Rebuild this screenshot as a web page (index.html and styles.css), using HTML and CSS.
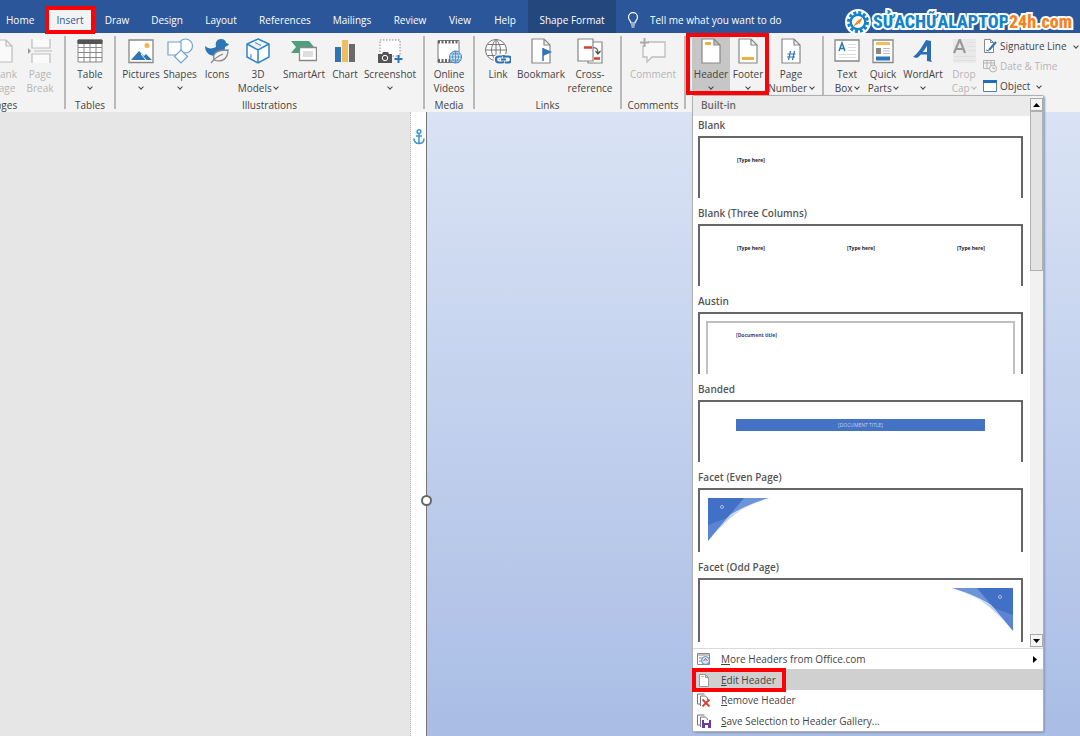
FILE: index.html
```html
<!DOCTYPE html>
<html lang="en">
<head>
<meta charset="utf-8">
<title>Insert Header</title>
<link rel="stylesheet" href="styles.css">
</head>
<body>
<div class="app">
  <header class="topbar">
    <nav class="tabs">
      <button class="tab">Home</button>
      <button class="tab active marked">Insert</button>
      <button class="tab">Draw</button>
      <button class="tab">Design</button>
      <button class="tab">Layout</button>
      <button class="tab">References</button>
      <button class="tab">Mailings</button>
      <button class="tab">Review</button>
      <button class="tab">View</button>
      <button class="tab">Help</button>
      <button class="tab contextual">Shape Format</button>
    </nav>
    <button class="tell">
      <svg width="12" height="16" viewBox="0 0 12 16" fill="none" stroke="#fff" stroke-width="1.2"><path d="M4 11c0-2-2.500-3-2.500-5.800a4.500 4.500 0 0 1 9 0C10.500 8 8 9 8 11zM4 13h4M4.500 15h3"/></svg>
      Tell me what you want to do
    </button>
    <div class="brand">
      <svg width="26" height="26" viewBox="0 0 26 26"><circle cx="13" cy="13" r="10.500" fill="none" stroke="#fff" stroke-width="5"/><circle cx="13" cy="13" r="9.500" fill="none" stroke="#1583c9" stroke-width="3" stroke-dasharray="3 1.970"/><circle cx="13" cy="13" r="7.300" fill="#fff" stroke="#1583c9" stroke-width="2.400"/><path d="M17.500 8.500l-3 6.500-2.500-2.500z" fill="#f58220"/><path d="M17.500 8.500L12 12.500l2 2zM8.500 17.500l3-5 2 2z" fill="#f58220"/></svg>
      <span class="brand-name">SỬACHỮALAPTOP<span class="brand-tail">24h.com</span></span>
    </div>
  </header>

  <section class="ribbon">
    <div class="group pages">
      <div class="tools">
        <button class="tool w36 off"><svg class="ico" viewBox="0 0 26 26" fill="#fafafa" stroke="#bdbdbd" stroke-width="1.200"><path d="M3 2h12l6 6v16H3zM15 2v6h6"/></svg>Blank<br>Page</button>
        <button class="tool w36 off"><svg class="ico" viewBox="0 0 26 26" fill="#fafafa" stroke="#bdbdbd" stroke-width="1.200"><path d="M5 1v9h18V1M5 25v-9h18v9M7 13h18"/><path d="M1 10l3 3-3 3z" fill="#999" stroke="none"/></svg>Page<br>Break</button>
      </div>
      <div class="caption">Pages</div>
    </div>
    <div class="group">
      <div class="tools">
        <button class="tool w48"><svg class="ico" viewBox="0 0 26 26" fill="#fff" stroke="#888" stroke-width="1"><path d="M1 2h24v22H1zM1 9.500h24M1 14.500h24M1 19.500h24M7 5v19M13 5v19M19 5v19"/><path d="M1 2h24v3.500H1z" fill="#555" stroke="#555"/></svg>Table<br><i class="chev"></i></button>
      </div>
      <div class="caption">Tables</div>
    </div>
    <div class="group pad">
      <div class="tools">
        <button class="tool w40"><svg class="ico" viewBox="0 0 26 26"><path d="M1 2h24v22.500H1z" fill="#fff" stroke="#888" stroke-width="1.300"/><circle cx="19" cy="7.500" r="2.500" fill="#f0b450"/><path d="M3 22l8-9 5 5 2-2 6 6z" fill="#2e75b6"/><path d="M13 16l5 6" stroke="#fff"/></svg>Pictures<br><i class="chev"></i></button>
        <button class="tool w38"><svg class="ico" viewBox="0 0 26 26" fill="#fff" stroke="#6fa3d2" stroke-width="1.200"><circle cx="18.500" cy="8" r="7"/><path d="M1 4h13v13H1z"/><path d="M14 12l6.500 6.500L14 25l-6.500-6.500z"/></svg>Shapes<br><i class="chev"></i></button>
        <button class="tool w36"><svg class="ico" viewBox="0 0 26 26"><path d="M1 8c3 3 7 3 11 1-1-5 1-8 5-8 3 0 5 2 5 4l3 1c-1 2-3 2-4 3 0 5-3 9-9 9C6 18 1 15 1 8z" fill="#2e75b6"/><path d="M10 22c-2-7 3-10 14-10 0 8-5 13-14 10z" fill="#f3f3f3" stroke="#888" stroke-width="1.300"/><path d="M7 25c3-4 7-7 12-9" fill="none" stroke="#888" stroke-width="1.300"/></svg>Icons</button>
        <button class="tool w46"><svg class="ico" viewBox="0 0 26 26" fill="#fff" stroke="#2e86c8" stroke-width="1.500"><path d="M13 1l11 5v13l-11 6-11-6V6zM2 6l11 6 11-6M13 12v13"/><path d="M6 16v4M10 4.500l6 3" stroke-width="1"/></svg>3D<br>Models <i class="chev"></i></button>
        <button class="tool w46"><svg class="ico" viewBox="0 0 26 26"><path d="M0 3h18l5 6-5 6H0l5-6z" fill="#4f9e7e"/><path d="M8.500 9.500h17v13h-17z" fill="#fff" stroke="#888" stroke-width="1.300"/><path d="M12 13h10v6H12z" fill="#ddd"/></svg>SmartArt</button>
        <button class="tool w36"><svg class="ico" viewBox="0 0 26 26"><path d="M3 9h6v15H3z" fill="#2e75b6"/><path d="M10 2h6v22h-6z" fill="#f2bd60"/><path d="M17 6h6v18h-6z" fill="#6a6a6a"/></svg>Chart</button>
        <button class="tool w54"><svg class="ico" viewBox="0 0 26 26"><path d="M3 2h20v16H3z" fill="#fff" stroke="#888" stroke-dasharray="1.500 1.500"/><path d="M1 16h4l1-2h5l1 2h3v9H1z" fill="#555"/><circle cx="8" cy="20" r="2.700" fill="#555" stroke="#fff"/><path d="M17.500 21h8M21.500 17v8" stroke="#2e75b6" stroke-width="2"/></svg>Screenshot<br><i class="chev"></i></button>
      </div>
      <div class="caption">Illustrations</div>
    </div>
    <div class="group">
      <div class="tools">
        <button class="tool w48"><svg class="ico" viewBox="0 0 26 26"><path d="M2 2.500h21v22H2z" fill="#fff" stroke="#777"/><path d="M2 4h21M2 22.500h21" stroke="#666" stroke-width="3" stroke-dasharray="2 1.500"/><circle cx="19.500" cy="19" r="6" fill="#d5e6f5" stroke="#3f87c6"/><path d="M13.500 19h12M19.500 13v12M15 16h9M15 22h9M19.500 13c-4 4-4 8 0 12 4-4 4-8 0-12" fill="none" stroke="#3f87c6" stroke-width=".8"/></svg>Online<br>Videos</button>
      </div>
      <div class="caption">Media</div>
    </div>
    <div class="group pad">
      <div class="tools">
        <button class="tool w36"><svg class="ico" viewBox="0 0 26 26" fill="none"><circle cx="11" cy="12" r="10.500" fill="#fff" stroke="#777"/><path d="M.5 12h21M11 1.500v21M2.500 6.500h17M2.500 17.500h17M11 1.500c-6 6-6 15 0 21M11 1.500c6 6 6 15 0 21" stroke="#777"/><path d="M17 18.500h-3a3 3 0 0 0 0 6h3M15 21.500h8M20 24.500h3a3 3 0 0 0 0-6h-3" stroke="#f3f3f3" stroke-width="5"/><path d="M17 18.500h-3a3 3 0 0 0 0 6h3a3 3 0 0 0 2-1M20 24.500h3a3 3 0 0 0 0-6h-3a3 3 0 0 0-2 1M16 21.500h5" stroke="#2e75b6" stroke-width="2.200"/></svg>Link</button>
        <button class="tool w50"><svg class="ico" viewBox="0 0 26 26"><path d="M4 1h12l6 6v18H4zM16 1v6h6" fill="#fff" stroke="#888" stroke-width="1.200"/><path d="M15 10l9 4-9 4z" fill="#2e75b6"/><path d="M15 10v13" stroke="#2e75b6" stroke-width="1.500"/></svg>Bookmark</button>
        <button class="tool w48"><svg class="ico" viewBox="0 0 26 26" fill="#fff" stroke="#888" stroke-width="1.200"><path d="M11 4h14v21H11z"/><path d="M1 1h15v22H1z"/><path d="M7 9.500h8M17 20.500h6" stroke="#d8402c" stroke-width="2.500"/><path d="M16 10c3-1 5 1 5 5M18.500 13l2.500 3 2.500-3" fill="none" stroke="#555"/></svg>Cross-<br>reference</button>
      </div>
      <div class="caption">Links</div>
    </div>
    <div class="group">
      <div class="tools">
        <button class="tool w62 off"><svg class="ico" viewBox="0 0 26 26" fill="#f8f8f8" stroke="#bdbdbd" stroke-width="1.300"><path d="M3 7v12h4v5l5-5h13V4H8"/><path d="M4.500 0v9M0 4.500h9" stroke="#aaa" stroke-width="2"/></svg>Comment</button>
      </div>
      <div class="caption">Comments</div>
    </div>
    <div class="group hf">
      <div class="tools">
        <div class="pair marked">
          <button class="tool w38 pressed"><svg class="ico" viewBox="0 0 26 26"><path d="M4 1h12l6 6v18H4zM16 1v6h6" fill="#fff" stroke="#888" stroke-width="1.200"/><path d="M7 5.500h6" stroke="#eeb044" stroke-width="3"/></svg>Header<br><i class="chev"></i></button>
          <button class="tool w36"><svg class="ico" viewBox="0 0 26 26"><path d="M4 1h12l6 6v18H4zM16 1v6h6" fill="#fff" stroke="#888" stroke-width="1.200"/><path d="M7 20.500h12" stroke="#eeb044" stroke-width="3"/></svg>Footer<br><i class="chev"></i></button>
        </div>
        <button class="tool w50"><svg class="ico" viewBox="0 0 26 26"><path d="M4 1h12l6 6v18H4zM16 1v6h6" fill="#fff" stroke="#888" stroke-width="1.200"/><path d="M12.500 13l-2 9M16.500 13l-2 9M9.500 16h8M9 19h8" stroke="#2e75b6" stroke-width="1.200"/></svg>Page<br>Number <i class="chev"></i></button>
      </div>

      <div class="menu">
        <div class="gallery">
          <div class="gallery-main">
            <div class="band">Built-in</div>
            <div class="entries">
              <button class="entry"><span class="name">Blank</span><span class="sheet"><span class="cols"><span>[Type here]</span></span></span></button>
              <button class="entry"><span class="name">Blank (Three Columns)</span><span class="sheet"><span class="cols"><span>[Type here]</span><span>[Type here]</span><span>[Type here]</span></span></span></button>
              <button class="entry"><span class="name">Austin</span><span class="sheet framed"><span class="inner">[Document title]</span></span></button>
              <button class="entry"><span class="name">Banded</span><span class="sheet"><span class="stripe">[DOCUMENT TITLE]</span></span></button>
              <button class="entry"><span class="name">Facet (Even Page)</span><span class="sheet facet"><svg width="61" height="43" viewBox="0 0 61 43"><path d="M0 0h61C35 8 16 22 0 43z" fill="#dfe8f7"/><path d="M0 0h61C44 5 31 11 20 18L0 27z" fill="#6d93d8"/><path d="M0 0h36L0 43z" fill="#5b85d2"/><path d="M0 0h36L19 20 0 27z" fill="#4170c6"/><path d="M20 19l12-7C20 21 10 31 0 43z" fill="#b9cdf0"/><circle cx="14" cy="9" r="1.500" fill="none" stroke="#a9bfe8"/></svg></span></button>
              <button class="entry"><span class="name">Facet (Odd Page)</span><span class="sheet facet odd"><svg width="61" height="43" viewBox="0 0 61 43"><path d="M61 0H0c26 8 45 22 61 43z" fill="#dfe8f7"/><path d="M61 0H0c17 5 30 11 41 18l20 9z" fill="#6d93d8"/><path d="M61 0H25l36 43z" fill="#5b85d2"/><path d="M61 0H25l17 20 19 7z" fill="#4170c6"/><path d="M41 19l-12-7c12 9 22 19 32 31z" fill="#b9cdf0"/><circle cx="48" cy="9" r="1.500" fill="none" stroke="#a9bfe8"/></svg></span></button>
            </div>
          </div>
          <div class="scroll">
            <button class="arrow" aria-label="Scroll up"><svg width="7" height="4" viewBox="0 0 7 4"><path d="M0 4l3.500-4L7 4z"/></svg></button>
            <div class="thumb"></div>
            <button class="arrow down" aria-label="Scroll down"><svg width="7" height="4" viewBox="0 0 7 4"><path d="M0 0h7L3.500 4z"/></svg></button>
          </div>
        </div>
        <div class="commands">
          <button class="command"><svg width="14" height="14" viewBox="0 0 14 14" fill="none"><path d="M.5 1.500h12v11H.5z" fill="#fff" stroke="#888"/><path d="M.5 3h12M2 6h3M2 9h3" stroke="#888"/><circle cx="8.500" cy="8.500" r="4" fill="#d5e6f5" stroke="#4b8fca"/><path d="M6.500 9l2-2.500 2 2.500" stroke="#d8402c"/></svg><span><u>M</u>ore Headers from Office.com</span><svg class="more" width="4" height="7" viewBox="0 0 4 7"><path d="M0 0l4 3.500L0 7z"/></svg></button>
          <button class="command hot"><svg width="14" height="14" viewBox="0 0 14 14"><path d="M2.500 1.500h6l3 3v9h-9zM8.500 1.500v3h3" fill="#fff" stroke="#999"/><path d="M4 3.500h3" stroke="#eeb044"/></svg><span class="marked"><u>E</u>dit Header</span></button>
          <button class="command"><svg width="14" height="14" viewBox="0 0 14 14" fill="none"><path d="M3 11H.5V1h7M3.500 13V3h5l2 2v2" stroke="#777"/><path d="M5.500 6.500l7 7M12.500 6.500l-7 7" stroke="#d8402c" stroke-width="1.800"/></svg><span><u>R</u>emove Header</span></button>
          <button class="command"><svg width="14" height="14" viewBox="0 0 14 14" fill="none"><path d="M3 11H.5V1h7M3.500 13V3h5l2 2v1" stroke="#777"/><path d="M5 6h9v8H5z" fill="#6d3aa0"/><path d="M7 6h5v3H7zM8 11h3v3H8z" fill="#fff"/></svg><span><u>S</u>ave Selection to Header Gallery...</span></button>
        </div>
      </div>
    </div>
    <div class="group pad last">
      <div class="tools">
        <button class="tool w36"><svg class="ico" viewBox="0 0 26 26"><path d="M1 2h24v21H1z" fill="#fff" stroke="#888" stroke-width="1.300"/><path d="M5 13l3-8 3 8M6 10.500h4" fill="none" stroke="#2e75b6" stroke-width="1.500"/><path d="M14 6.500h8M14 9.500h8M14 12.500h8M5 16.500h17M5 19.500h17" stroke="#ddd"/></svg>Text<br>Box <i class="chev"></i></button>
        <button class="tool w36"><svg class="ico" viewBox="0 0 26 26"><path d="M3 2h20v22.500H3z" fill="#fff" stroke="#888" stroke-width="1.300"/><path d="M6 5.500h14" stroke="#f2bd60" stroke-width="3"/><path d="M6 10h5v6H6z" fill="#888"/><path d="M13 10.500h7M13 13h7M13 15.500h7" stroke="#bbb"/><path d="M6 20.500h14" stroke="#2e75b6" stroke-width="4"/></svg>Quick<br>Parts <i class="chev"></i></button>
        <button class="tool w44"><svg class="ico" viewBox="0 0 26 26" fill="#2e6db5"><path d="M16 2l5 1v19l1 2-5-1V8c-4 6-7 10-10 12l-4-1c5-4 9-10 13-17z"/><path d="M10 14h9v2.500H8z"/></svg>WordArt<br><i class="chev"></i></button>
        <button class="tool w38 off"><svg class="ico" viewBox="0 0 26 26" fill="none"><path d="M2 1h23v24H2z" fill="#e9e9e9"/><path d="M3 15L8.500 2h.5l5 13M5 11h7.500" stroke="#999" stroke-width="2.200"/><path d="M16 4.500h8M16 8.500h8M16 12.500h8M3 18.500h21M3 22.500h21" stroke="#e0e0e0"/></svg>Drop<br>Cap <i class="chev"></i></button>
        <div class="rows">
          <button class="row"><svg width="14" height="14" viewBox="0 0 14 14" fill="none"><path d="M1.500.5h6l3 3v10h-9zM7.500.5v3h3" fill="#fff" stroke="#888"/><path d="M13 3l-7 8" stroke="#2e75b6" stroke-width="2"/><path d="M3 11l3 1" stroke="#2e75b6"/></svg>Signature Line <i class="chev wide"></i></button>
          <button class="row off"><svg width="14" height="14" viewBox="0 0 14 14" fill="none" stroke="#b5b5b5"><path d="M.5 1.500h11v8H.5zM.5 4h11M4 2v7M8 2v7"/><circle cx="10" cy="9.500" r="3.500" fill="#f3f3f3"/><path d="M10 7.500v2h2"/></svg>Date &amp; Time</button>
          <button class="row"><svg width="14" height="14" viewBox="0 0 14 14"><path d="M.5 1.500h13v11H.5z" fill="#fff" stroke="#5a7fae"/><path d="M0 1h14v3H0z" fill="#1f6dbb"/></svg>Object <i class="chev wide"></i></button>
        </div>
      </div>
    </div>
  </section>

  <main class="workspace">
    <div class="shape"></div>
    <div class="margin">
      <svg class="anchor" width="12" height="16" viewBox="0 0 12 16" fill="none" stroke="#3a96cf" stroke-width="1.500"><circle cx="6" cy="2.700" r="1.900"/><path d="M6 4.500v10M3 7h6M1 9.500c0 3 2 5 5 5s5-2 5-5"/></svg>
      <span class="handle"></span>
    </div>
    <div class="backdrop"></div>
  </main>
</div>
</body>
</html>
```

FILE: styles.css
```css
* { box-sizing: border-box; }
body {
  margin: 0;
  font-family: "Open Sans", "Noto Sans", sans-serif;
  font-size: 10px;
  line-height: 14px;
  color: #444;
}
button {
  font: inherit;
  color: inherit;
  background: none;
  border: 0;
  padding: 0;
  margin: 0;
  white-space: nowrap;
}
svg { flex: none; }
.app {
  height: 100vh;
  min-height: 736px;
  display: flex;
  flex-direction: column;
  overflow: hidden;
}

/* Tab bar */
.topbar {
  display: flex;
  height: 33px;
  background: #2b579a;
  color: #fff;
}
.tabs {
  display: grid;
  grid-template-columns: 40px 48px 46px 54px 54px 74px 60px 56px 44px 46px 88px;
  padding-left: 6px;
}
.tab { padding-top: 7px; font-weight: 500; }
.active {
  color: #2b579a;
  background: #f3f3f3;
  margin-top: 8px;
  padding-top: 0;
  padding-bottom: 1px;
}
.tab:first-child { text-align: left; }
.contextual { background: #24477d; }
.marked { position: relative; }
.marked::after {
  content: "";
  position: absolute;
  inset: -2px -1px -1px;
  border: 4px solid #fb0207;
}
.tell {
  display: flex;
  align-items: center;
  gap: 11px;
  padding: 7px 0 0 11px;
}
.brand {
  display: flex;
  align-items: center;
  margin-left: auto;
  padding: 11px 8px 0 0;
  gap: 2px;
  position: relative;
  z-index: 2;
}
.brand-name {
  font-family: "Roboto Condensed", Roboto, sans-serif;
  font-size: 18px;
  font-weight: 800;
  line-height: 24px;
  color: #1583c9;
  -webkit-text-stroke: 4px #fff;
  paint-order: stroke fill;
}
.brand-tail { color: #f58220; }

/* Ribbon */
.ribbon {
  display: flex;
  height: 79px;
  background: #f3f3f3;
  padding: 3px 0;
}
.group {
  flex: none;
  display: flex;
  flex-direction: column;
  border-right: 2px solid #b9b9b9;
  position: relative;
}
.pages { width: 123px; margin-left: -57px; }
.pages .tools { justify-content: flex-end; padding-right: 6px; }
.pad .tools { padding: 0 6px 0 5px; }
.hf { padding: 0 6px; }
.last { flex: 1; border-right: 0; }
.tools { display: flex; flex: 1; align-items: flex-start; }
.caption { text-align: center; height: 11px; }
.tool { padding: 2px 0 0; text-align: center; }
.ico { display: block; width: 26px; height: 26px; margin: 0 auto 3px; }
.w36 { width: 36px; }
.w38 { width: 38px; }
.w40 { width: 40px; }
.w44 { width: 44px; }
.w46 { width: 46px; }
.w48 { width: 48px; }
.w50 { width: 50px; }
.w54 { width: 54px; }
.w62 { width: 62px; }
.off { color: #b5b5b5; }
.pressed { background: #c6c6c6; }
.chev {
  display: inline-block;
  width: 4px;
  height: 4px;
  border: solid currentColor;
  border-width: 0 1px 1px 0;
  transform: rotate(45deg);
  vertical-align: 3px;
}
.wide { margin-left: 4px; }
.pair { display: flex; z-index: 2; }
.pair::after { inset: -3px -3px 0 -6px; }
.rows { display: grid; grid-auto-rows: 20px; align-content: start; }
.row { display: flex; align-items: center; gap: 3px; height: 19px; }

/* Header gallery menu */
.menu {
  position: absolute;
  z-index: 1;
  top: 59px;
  left: 6px;
  width: 352px;
  background: #fff;
  border: 1px solid #b0b0b0;
  border-radius: 2px;
  box-shadow: 1px 1px 2px #8899bb;
}
.gallery { display: flex; border-bottom: 1px solid #d9d9d9; }
.gallery-main { flex: 1; min-width: 0; }
.band {
  height: 20px;
  padding: 2px 8px;
  background: #ebebeb;
  color: #666;
  font-weight: 600;
}
.entries {
  display: grid;
  grid-template-rows: repeat(6, 1fr);
  height: 532px;
}
.entry {
  display: flex;
  flex-direction: column;
  text-align: left;
  padding: 2px 7px 6px 5px;
}
.name { height: 18px; font-weight: 600; color: #555; }
.sheet {
  display: block;
  flex: 1;
  align-self: stretch;
  border: 2px solid #666;
  border-bottom: 0;
}
.cols {
  display: grid;
  grid-template-columns: 110px 110px 1fr;
  padding: 15px 0 0 37px;
  font-size: 5px;
  font-weight: 700;
  color: #222;
}
.framed { padding: 7px 6px 0; }
.inner {
  display: block;
  height: 100%;
  border: 2px solid #c0c0c0;
  border-bottom: 0;
  padding: 5px 28px;
  font-size: 5px;
  font-weight: 700;
  color: #2c4a8a;
}
.stripe {
  display: block;
  margin: 17px 36px 0;
  height: 12px;
  line-height: 12px;
  background: #4472c4;
  color: #c3d1ec;
  font-size: 5px;
  text-align: center;
}
.facet { padding: 8px; }
.odd { text-align: right; }
.scroll {
  width: 13px;
  display: flex;
  flex-direction: column;
  background: #f1f1f1;
  padding: 2px 0 1px;
}
.arrow {
  display: grid;
  place-items: center;
  height: 13px;
  border: 1px solid #aaa;
  background: #f5f5f5;
}
.down { margin-top: auto; }
.thumb { height: 160px; background: #e3e3e3; border: 1px solid #b0b0b0; }
.commands { display: grid; grid-template-rows: 20px 21px 20px 21px; }
.command {
  display: flex;
  align-items: center;
  gap: 10px;
  padding: 0 6px 0 4px;
}
.hot { background: #d0d0d0; }
.hot .marked::after { inset: -5px -10px -5px -29px; }
.more { margin-left: auto; }

/* Document area */
.workspace {
  flex: 1;
  display: grid;
  grid-template-columns: 411px 16px 1fr;
}
.shape { background: #e6e6e6; border-right: 1px dotted #bbb; }
.margin {
  position: relative;
  border-right: 1px solid #777;
  padding: 17px 0 0 2px;
}
.handle {
  position: absolute;
  top: 383px;
  right: -6px;
  width: 11px;
  height: 11px;
  border: 2px solid #666;
  border-radius: 50%;
  background: #fff;
}
.backdrop { background: linear-gradient(#dae3f5, #a9bde5); }
```
